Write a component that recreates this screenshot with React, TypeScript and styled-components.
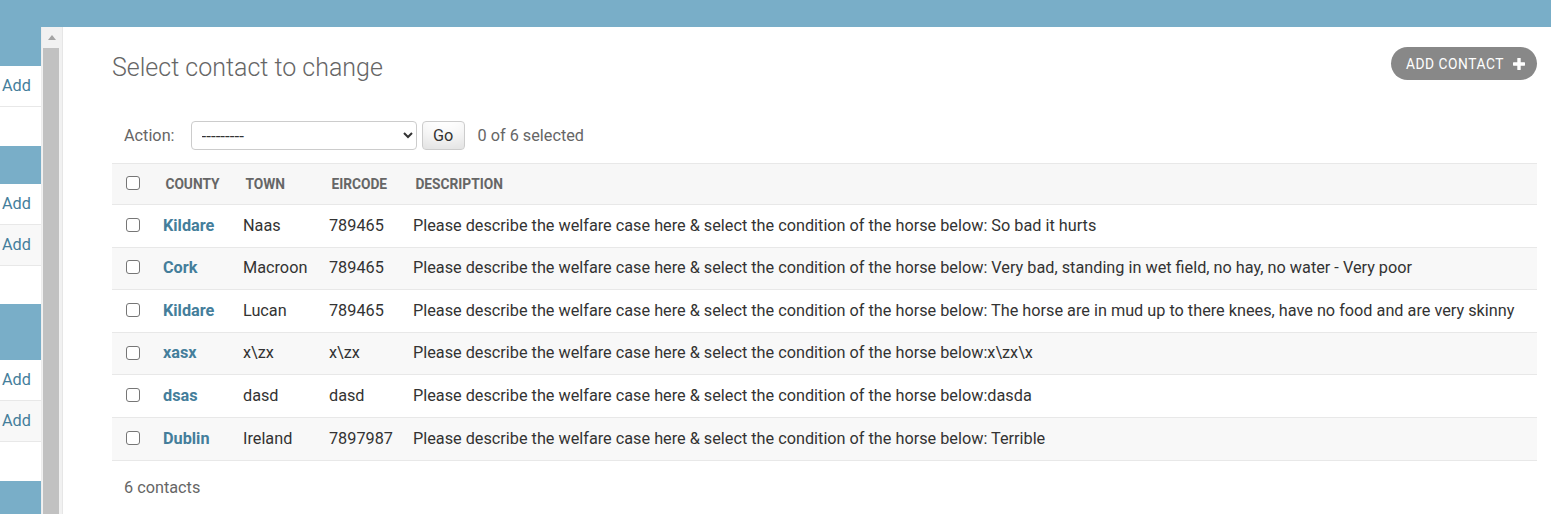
import React from "react";
import styled, { createGlobalStyle } from "styled-components";

const GlobalStyle = createGlobalStyle`
  html, body { margin: 0; padding: 0; background: #fff; }
  body { font-family: Roboto, "Liberation Sans", Arial, sans-serif; color: #333; overflow: hidden; }
  * { box-sizing: border-box; }
`;

const Page = styled.div`
  width: 1551px;
  height: 514px;
  display: flex;
  flex-direction: column;
  overflow: hidden;
`;

const TopBar = styled.div`
  height: 27px;
  flex: none;
  background: #79aec8;
`;

const Main = styled.div`
  flex: 1;
  display: flex;
  min-height: 0;
`;

const Sidebar = styled.nav`
  width: 42px;
  flex: none;
  border-right: 1px solid #ececec;
  overflow: hidden;
`;

const Module = styled.div`
  margin-bottom: 38.5px;
`;

const Caption = styled.div<{ $h: number }>`
  height: ${(p) => p.$h}px;
  background: #79aec8;
`;

const SideRow = styled.div<{ $alt?: boolean }>`
  height: 41px;
  display: flex;
  align-items: center;
  padding-left: 2px;
  padding-bottom: 1px;
  border-bottom: 1px solid #e8e8e8;
  background: ${(p) => (p.$alt ? "#f8f8f8" : "#fff")};
  font-size: 16.25px;
  color: #447e9b;
`;

const ScrollTrack = styled.div`
  width: 21px;
  flex: none;
  background: #f1f1f1;
  border-right: 1px solid #e6e6e6;
  display: flex;
  flex-direction: column;
  padding: 0 3px 0 1px;
`;

const ScrollButton = styled.div`
  height: 21px;
  display: flex;
  align-items: center;
  justify-content: center;
  padding-left: 2px;
`;

const Thumb = styled.div`
  flex: 1;
  background: #c1c1c1;
`;

const Content = styled.main`
  flex: 1;
  min-width: 0;
  padding: 20px 14px 0 49px;
`;

const HeaderRow = styled.div`
  display: flex;
  justify-content: space-between;
  align-items: flex-start;
  margin-bottom: 22px;
`;

const Title = styled.h1`
  margin: 0;
  padding-top: 2px;
  font-size: 25px;
  line-height: 38px;
  font-weight: 300;
  color: #666;
`;

const AddButton = styled.a`
  display: flex;
  align-items: center;
  gap: 9px;
  height: 33px;
  padding: 0 12px 0 15px;
  border-radius: 17px;
  background: #888;
  color: #fff;
  font-size: 13.75px;
  letter-spacing: 0.55px;
  text-transform: uppercase;
  text-decoration: none;
`;

const Actions = styled.div`
  display: flex;
  align-items: center;
  padding: 12px 12px 13px;
  font-size: 16.25px;
  color: #666;
`;

const Select = styled.select`
  margin-left: 16px;
  width: 226px;
  height: 29px;
  border: 1px solid #ccc;
  border-radius: 4px;
  background: #fff;
  color: #333;
  font-family: Roboto, "Liberation Sans", Arial, sans-serif;
  font-size: 17px;
  padding: 0 0 0 6px;
`;

const GoButton = styled.button`
  margin-left: 5px;
  height: 29px;
  width: 43px;
  border: 1px solid #ccc;
  border-radius: 4px;
  background: #fff;
  box-shadow: 0 -18px 24px -12px rgba(0, 0, 0, 0.15) inset;
  font-family: Roboto, "Liberation Sans", Arial, sans-serif;
  font-size: 16.25px;
  color: #333;
  padding: 0;
`;

const Counter = styled.span`
  margin-left: 13px;
`;

const Table = styled.table`
  width: 100%;
  border-collapse: collapse;
  table-layout: fixed;
  border-top: 1px solid #e8e8e8;
`;

const HeadCell = styled.th`
  padding: 0;
  text-align: left;
  background: #f7f7f7;
  border-bottom: 1px solid #e8e8e8;
  vertical-align: middle;
`;

const HeadText = styled.span`
  display: block;
  padding: 10px 12px;
  line-height: 20px;
  font-size: 13.75px;
  font-weight: 700;
  text-transform: uppercase;
  color: #666;
`;

const CheckCell = styled.td<{ $head?: boolean }>`
  padding: ${(p) => (p.$head ? "0" : "9.6px 0")};
  text-align: center;
  vertical-align: ${(p) => (p.$head ? "middle" : "top")};
  line-height: 22.4px;
  background: ${(p) => (p.$head ? "#f7f7f7" : "transparent")};
  border-bottom: ${(p) => (p.$head ? "1px solid #e8e8e8" : "none")};
`;

const Box = styled.input.attrs({ type: "checkbox" })`
  appearance: none;
  display: inline-block;
  width: 14px;
  height: 14px;
  margin: 0;
  border: 1px solid #767676;
  border-radius: 3px;
  background: #fff;
  vertical-align: middle;
  position: relative;
  top: -1.5px;
`;

const Row = styled.tr<{ $alt: boolean }>`
  background: ${(p) => (p.$alt ? "#f8f8f8" : "#fff")};
  border-bottom: 1px solid #e8e8e8;
`;

const Cell = styled.td`
  padding: 9.6px;
  font-size: 16.25px;
  line-height: 22.4px;
  color: #333;
  vertical-align: top;
  white-space: nowrap;
`;

const LinkCell = styled(Cell).attrs({ as: "th" })`
  text-align: left;
  font-weight: 700;
  color: #447e9b;
`;

const Paginator = styled.p`
  margin: 0;
  padding: 14px 12px 12px;
  font-size: 16.25px;
  line-height: 26.4px;
  color: #666;
`;

const sidebar = [
  { h: 39, rows: 1 },
  { h: 38, rows: 2 },
  { h: 56, rows: 2 },
  { h: 39, rows: 0 },
];

const pre = "Please describe the welfare case here & select the condition of the horse below:";

const rows = [
  ["Kildare", "Naas", "789465", " So bad it hurts"],
  ["Cork", "Macroon", "789465", " Very bad, standing in wet field, no hay, no water - Very poor"],
  ["Kildare", "Lucan", "789465", " The horse are in mud up to there knees, have no food and are very skinny"],
  ["xasx", "x\\zx", "x\\zx", "x\\zx\\x"],
  ["dsas", "dasd", "dasd", "dasda"],
  ["Dublin", "Ireland", "7897987", " Terrible"],
];

const PlusIcon = () => (
  <svg width="12" height="12" viewBox="0 0 12 12" aria-hidden="true">
    <rect x="4.3" y="0" width="3.4" height="12" rx="0.6" fill="#fff" />
    <rect x="0" y="4.3" width="12" height="3.4" rx="0.6" fill="#fff" />
  </svg>
);

export default function App() {
  return (
    <Page>
      <GlobalStyle />
      <TopBar />
      <Main>
        <Sidebar>
          {sidebar.map((m, i) => (
            <Module key={i}>
              <Caption $h={m.h} />
              {Array.from({ length: m.rows }).map((_, j) => (
                <SideRow key={j} $alt={j % 2 === 1}>Add</SideRow>
              ))}
            </Module>
          ))}
        </Sidebar>
        <ScrollTrack>
          <ScrollButton>
            <svg width="8" height="5" viewBox="0 0 8 5" aria-hidden="true">
              <path d="M0 5 L4 0 L8 5 Z" fill="#a3a3a3" />
            </svg>
          </ScrollButton>
          <Thumb />
        </ScrollTrack>
        <Content>
          <HeaderRow>
            <Title>Select contact to change</Title>
            <AddButton href="#">
              Add contact
              <PlusIcon />
            </AddButton>
          </HeaderRow>
          <Actions>
            <label>Action:</label>
            <Select defaultValue="">
              <option value="">---------</option>
            </Select>
            <GoButton>Go</GoButton>
            <Counter>0 of 6 selected</Counter>
          </Actions>
          <Table>
            <colgroup>
              <col style={{ width: "41.4px" }} />
              <col style={{ width: "80px" }} />
              <col style={{ width: "86px" }} />
              <col style={{ width: "84px" }} />
              <col />
            </colgroup>
            <thead>
              <tr>
                <CheckCell as="th" $head>
                  <Box />
                </CheckCell>
                <HeadCell><HeadText>County</HeadText></HeadCell>
                <HeadCell><HeadText>Town</HeadText></HeadCell>
                <HeadCell><HeadText>Eircode</HeadText></HeadCell>
                <HeadCell><HeadText>Description</HeadText></HeadCell>
              </tr>
            </thead>
            <tbody>
              {rows.map((r, i) => (
                <Row key={i} $alt={i % 2 === 1}>
                  <CheckCell><Box /></CheckCell>
                  <LinkCell>{r[0]}</LinkCell>
                  <Cell>{r[1]}</Cell>
                  <Cell>{r[2]}</Cell>
                  <Cell>{pre + r[3]}</Cell>
                </Row>
              ))}
            </tbody>
          </Table>
          <Paginator>6 contacts</Paginator>
        </Content>
      </Main>
    </Page>
  );
}
